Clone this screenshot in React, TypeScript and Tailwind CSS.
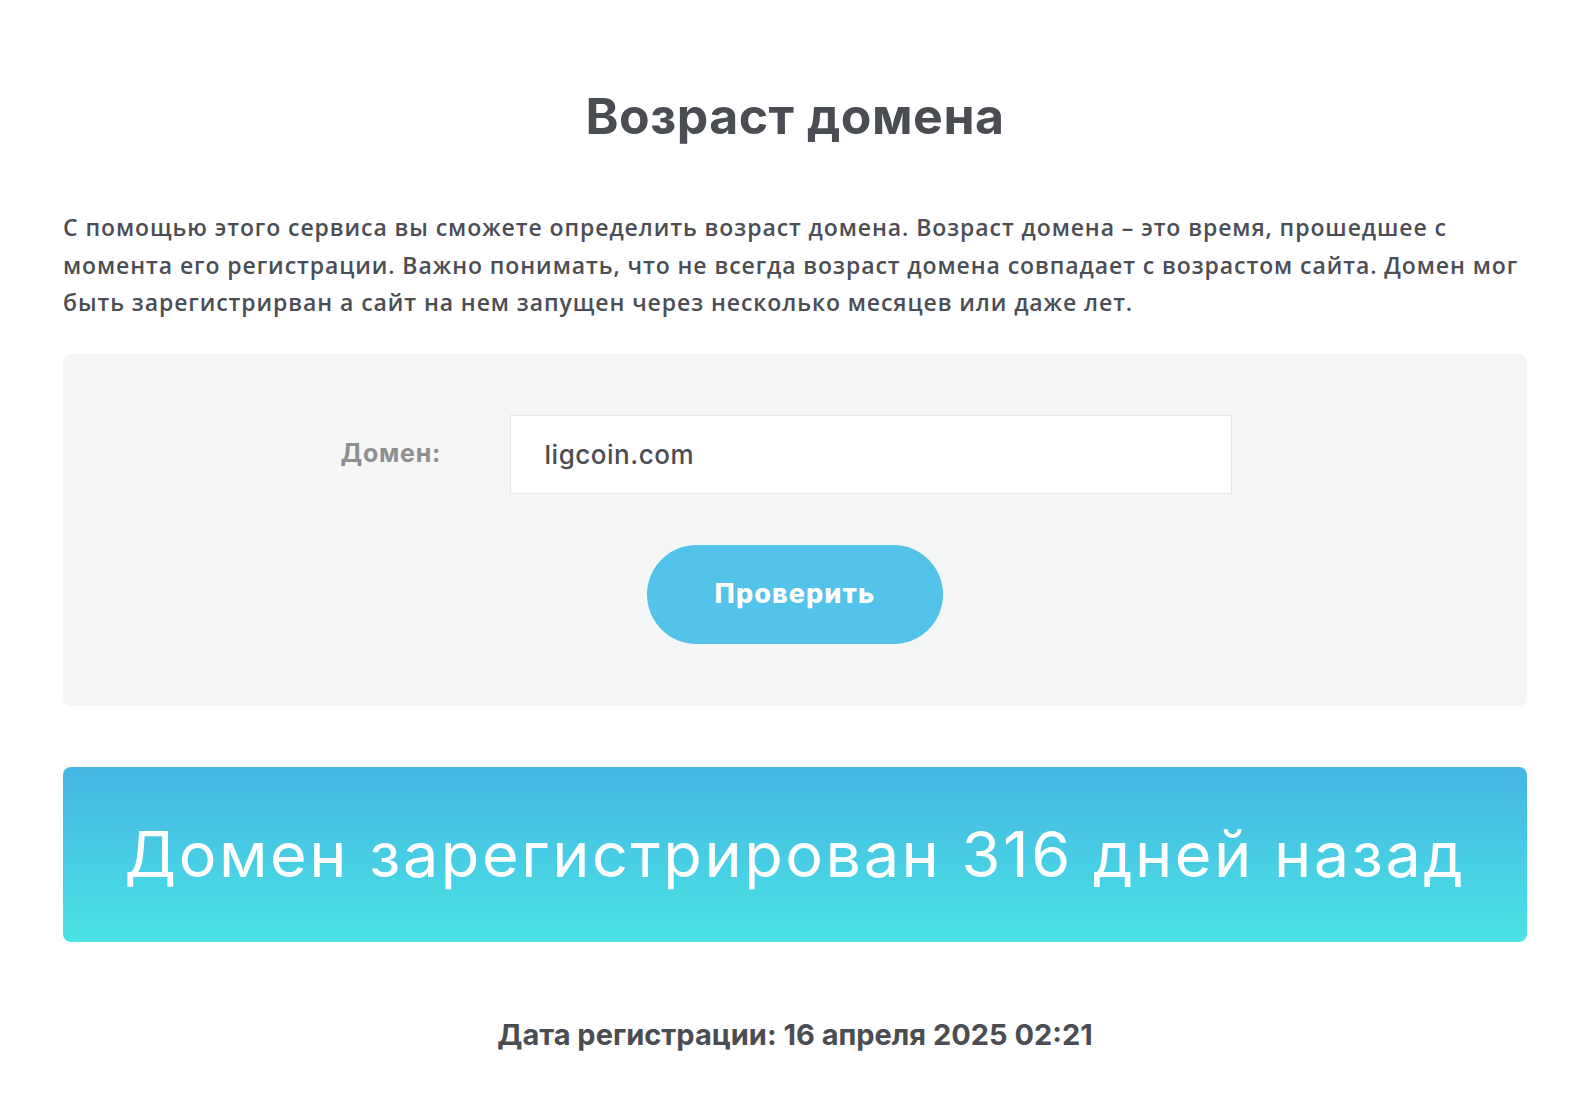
import React, { useState } from 'react';

// Шрифты: заголовки широким гротеском, текст — более узким
const headFont = "font-['Inter','Noto_Sans',sans-serif]";
const bodyFont = "font-['Open_Sans','Noto_Sans',sans-serif]";

export default function App() {
  const [domain, setDomain] = useState('ligcoin.com');

  return (
    <div className="min-h-screen bg-white px-[63px] pt-[86px] pb-10 text-[#4a4d52]">
      {/* Заголовок */}
      <h1 className={`${headFont} text-center text-[50px] font-bold leading-[60px] tracking-[0.01em] text-[#4a4d52]`}>
        Возраст домена
      </h1>

      {/* Описание сервиса */}
      <p className={`${bodyFont} mt-[63px] text-[23px] font-semibold leading-[37.5px] tracking-[0.04em] text-[#4b4e54]`}>
        С помощью этого сервиса вы сможете определить возраст домена. Возраст домена – это время, прошедшее с
        момента его регистрации. Важно понимать, что не всегда возраст домена совпадает с возрастом сайта. Домен мог
        быть зарегистрирван а сайт на нем запущен через несколько месяцев или даже лет.
      </p>

      {/* Форма проверки */}
      <form
        className="mt-[32px] flex flex-col items-center rounded-lg bg-[#f5f6f6] pt-[61px] pb-[62px]"
        onSubmit={(e) => e.preventDefault()}
      >
        <div className="flex items-center gap-[69px] pr-[18px]">
          <label className={`${headFont} w-[100px] whitespace-nowrap text-right text-[25px] font-bold tracking-[0.03em] text-[#8e8f90]`}>
            Домен:
          </label>
          <input
            value={domain}
            onChange={(e) => setDomain(e.target.value)}
            className={`${headFont} h-[79px] w-[722px] border border-[#e6e8e8] bg-white px-[34px] text-[26px] font-medium tracking-[0.02em] text-[#4a4d52] outline-none`}
          />
        </div>
        <button
          type="submit"
          className={`${headFont} mt-[51px] h-[99px] w-[296px] rounded-full bg-[#53c3ea] text-[27px] font-extrabold tracking-[0.04em] text-white`}
        >
          Проверить
        </button>
      </form>

      {/* Результат */}
      <div className="mt-[61px] flex h-[175px] items-center justify-center rounded-lg bg-gradient-to-b from-[#46b5e3] to-[#4ae3e4]">
        <span className={`${headFont} text-[63px] font-normal tracking-[0.04em] text-white`}>
          Домен зарегистрирован 316 дней назад
        </span>
      </div>

      <p className={`${headFont} mt-[73px] text-center text-[29px] font-bold leading-[40px] text-[#4a4d52]`}>
        Дата регистрации: 16 апреля 2025 02:21
      </p>
    </div>
  );
}
